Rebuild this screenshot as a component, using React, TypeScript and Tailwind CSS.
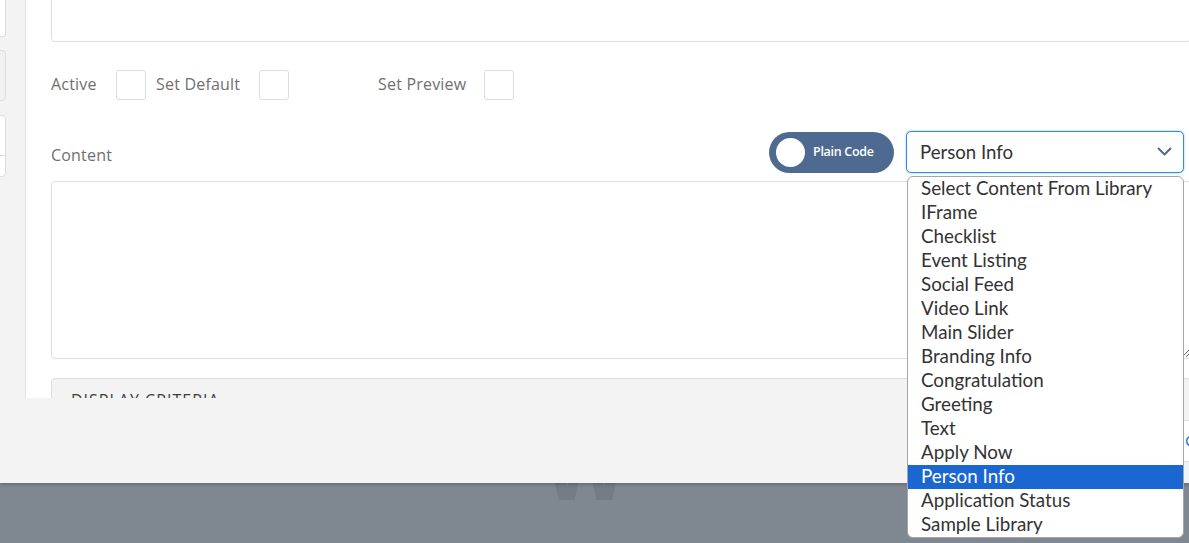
import React from "react";

const OPTIONS = [
  "Select Content From Library",
  "IFrame",
  "Checklist",
  "Event Listing",
  "Social Feed",
  "Video Link",
  "Main Slider",
  "Branding Info",
  "Congratulation",
  "Greeting",
  "Text",
  "Apply Now",
  "Person Info",
  "Application Status",
  "Sample Library",
];

function Checkbox() {
  return <div className="h-[30px] w-[30px] shrink-0 rounded-[3px] border border-[#d8dde6] bg-white" />;
}

function LeftStrip() {
  return (
    <div className="w-[25px] shrink-0 overflow-hidden bg-[#f3f3f3]">
      <div className="-ml-[30px] h-[37px] w-[36px] rounded-br-[4px] border border-t-0 border-[#d8dde6] bg-white" />
      <div className="-ml-[30px] mt-[13px] h-[51px] w-[36px] rounded-r-[4px] border border-[#d8dde6] bg-[#f1f1f1]" />
      <div className="-ml-[30px] mt-[14px] h-[62px] w-[36px] rounded-r-[4px] border border-[#d8dde6] bg-white">
        <div className="mt-[39px] border-t border-[#d8dde6]" />
      </div>
    </div>
  );
}

function Toggle() {
  return (
    <div className="flex h-[41px] w-[125px] shrink-0 items-center rounded-full bg-[#4f6a91] pl-[7px]">
      <div className="h-[29px] w-[29px] rounded-full bg-white" />
      <span className="ml-[8px] text-[12.5px] font-semibold tracking-[-0.3px] text-white">Plain Code</span>
    </div>
  );
}

function SelectBox() {
  return (
    <div className="ml-[12px] flex h-[42px] w-[278px] shrink-0 items-center justify-between rounded-[5px] border border-[#2b8ef0] bg-white pl-[13px] pr-[11px] shadow-[0_0_2px_#6bb3f7] [font-family:Lato,'Noto_Sans',sans-serif]">
      <span className="pt-[1px] text-[18.6px] text-[#333333]">Person Info</span>
      <svg width="15" height="10" viewBox="0 0 15 10" fill="none">
        <polyline points="1.5,1.5 7.5,7.5 13.5,1.5" stroke="#54698d" strokeWidth="2" strokeLinecap="round" strokeLinejoin="round" />
      </svg>
    </div>
  );
}

function Dropdown() {
  return (
    <ul className="absolute left-[907px] top-[176px] z-20 w-[277px] overflow-hidden rounded-[6px] border border-[#a6a6a6] bg-white [font-family:Lato,'Noto_Sans',sans-serif]">
      {OPTIONS.map((o) => (
        <li
          key={o}
          className={`h-[24px] whitespace-nowrap pl-[13px] text-[18.8px] leading-[22px] ${
            o === "Person Info" ? "bg-[#1a67d2] text-white" : "text-[#333333]"
          }`}
        >
          {o}
        </li>
      ))}
    </ul>
  );
}

export default function App() {
  return (
    <div className="relative h-[543px] w-[1189px] overflow-hidden bg-[#7f8891] [font-family:'Open_Sans',sans-serif]">
      {/* logo of the page behind the modal */}
      <div className="absolute left-[543px] top-[424px] text-[90px] font-bold leading-none text-[#737c87] [font-family:'Liberation_Sans',sans-serif]">
        W
      </div>

      <div className="relative z-10 flex h-[483px] flex-col bg-[#f3f3f3] shadow-[0_2px_3px_rgba(0,0,0,0.18)]">
        <div className="flex h-[398px] overflow-hidden">
          <LeftStrip />
          <main className="flex-1 overflow-hidden border-l border-[#e2e2e2] bg-white pl-[25px]">
            <div className="w-[1140px]">
              <div className="-mt-[20px] h-[62px] rounded-[4px] border border-[#d8dde6]" />

              <div className="mt-[28px] flex h-[30px] items-center text-[16px] tracking-[0.2px] text-[#6f6f6f]">
                <span className="w-[65px] pb-[3px]">Active</span>
                <Checkbox />
                <span className="ml-[10px] w-[103px] pb-[3px]">Set Default</span>
                <Checkbox />
                <span className="ml-[89px] w-[106px] pb-[3px]">Set Preview</span>
                <Checkbox />
              </div>

              <div className="mt-[31px] flex h-[42px] items-center pr-[7px]">
                <span className="flex-1 pt-[6px] text-[16px] tracking-[0.2px] text-[#6f6f6f]">Content</span>
                <Toggle />
                <SelectBox />
              </div>

              <textarea className="mt-[8px] block h-[178px] w-full rounded-[4px] border border-[#d8dde6] outline-none" />

              <div className="mt-[19px] h-[60px] rounded-t-[4px] border border-[#d8dde6] bg-[#f3f3f3] px-[19px] pt-[9px] text-[16px] tracking-[1px] text-[#3e3e3c]">
                DISPLAY CRITERIA
              </div>
            </div>
          </main>
        </div>

        <footer className="flex flex-1 items-center">
          <button className="ml-[1168px] h-[42px] shrink-0 rounded-[4px] border border-[#d8dde6] bg-white px-[16px] text-[15px] text-[#0070d2]">
            Cancel
          </button>
        </footer>
      </div>

      <Dropdown />
    </div>
  );
}
